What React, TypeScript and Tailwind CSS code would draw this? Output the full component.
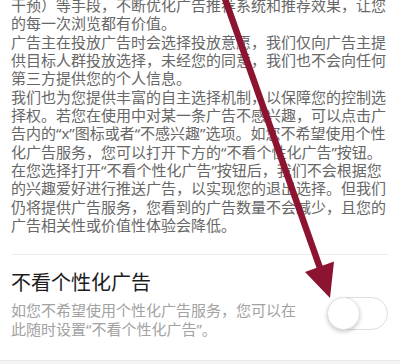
import React from "react";

const para = [
  "干预）等手段，不断优化广告推荐系统和推荐效果，让您",
  "的每一次浏览都有价值。",
  "广告主在投放广告时会选择投放意愿，我们仅向广告主提",
  "供目标人群投放选择，未经您的同意，我们也不会向任何",
  "第三方提供您的个人信息。",
  "我们也为您提供丰富的自主选择机制，以保障您的控制选",
  "择权。若您在使用中对某一条广告不感兴趣，可以点击广",
  "告内的“x”图标或者“不感兴趣”选项。如您不希望使用个性",
  "化广告服务，您可以打开下方的“不看个性化广告”按钮。",
  "在您选择打开“不看个性化广告”按钮后，我们不会根据您",
  "的兴趣爱好进行推送广告，以实现您的退出选择。但我们",
  "仍将提供广告服务，您看到的广告数量不会减少，且您的",
  "广告相关性或价值性体验会降低。",
];

export default function App() {
  return (
    <div
      className="relative flex flex-col w-[400px] h-[364px] overflow-hidden bg-white"
      style={{ fontFamily: '"Noto Sans", "Noto Sans CJK SC", sans-serif' }}
    >
      <div className="px-[11px] -mt-[4px] text-[15px] leading-[18.33px] text-[#676767]">
        {para.map((l, i) => (
          <div key={i} className="whitespace-nowrap">
            {l}
          </div>
        ))}
      </div>
      <div className="mx-[12px] mt-[20px] h-px bg-[#ececec]" />
      <div className="flex items-start justify-between pl-[11px] pr-[12px] pt-[15px]">
        <div>
          <div className="text-[20px] leading-[26px] text-[#1c1c1c]">不看个性化广告</div>
          <div className="mt-[5px] text-[15px] leading-[18.5px] text-[#a2a2a2]">
            <div className="whitespace-nowrap">如您不希望使用个性化广告服务，您可以在</div>
            <div className="whitespace-nowrap">此随时设置“不看个性化广告”。</div>
          </div>
        </div>
        <div className="mt-[27px] flex items-center w-[61px] h-[33px] rounded-full border border-[#dedede] bg-white">
          <div className="-ml-px w-[33px] h-[33px] rounded-full bg-white border border-[#e3e3e3] shadow-[0_2px_4px_rgba(0,0,0,0.2)]" />
        </div>
      </div>
      <div className="flex-1" />
      <div className="h-[4px] border-t border-[#e9e9e9] bg-[#f4f4f4]" />
      <svg className="absolute left-0 top-0" width="400" height="364" viewBox="0 0 400 364">
        <line x1="224" y1="-4" x2="320" y2="268" stroke="#8c1430" strokeWidth="6.5" />
        <polygon points="305,272 334,261.5 330,298" fill="#8c1430" />
      </svg>
    </div>
  );
}
